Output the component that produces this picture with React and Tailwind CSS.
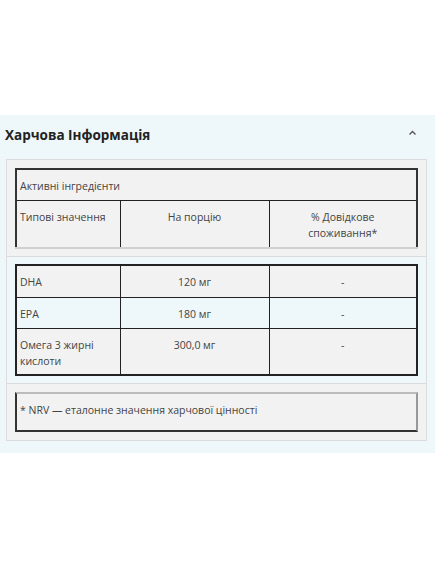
import React from 'react';

const cell = 'border border-[#222] align-top px-[3px] pt-[8px] leading-[16px]';

function HeaderTable() {
  return (
    <table className="w-full border-collapse border-2 border-[#333] border-b-[#d0d0d0] text-[10.5px] text-[#444]">
      <tbody>
        <tr className="h-[31px]">
          <td colSpan={3} className={cell}>Активні інгредієнти</td>
        </tr>
        <tr className="h-[48px]">
          <td className={`${cell} w-[104px]`}>Типові значення</td>
          <td className={`${cell} w-[149px] text-center`}>На порцію</td>
          <td className={`${cell} text-center`}>
            % Довідкове
            <br />
            споживання*
          </td>
        </tr>
      </tbody>
    </table>
  );
}

const rows = [
  { name: 'DHA', amount: '120 мг', h: 'h-[32px]', bg: 'bg-[#f2f2f2]' },
  { name: 'EPA', amount: '180 мг', h: 'h-[31px]', bg: 'bg-[#eef7f9]' },
  { name: 'Омега 3 жирні кислоти', amount: '300,0 мг', h: 'h-[47px]', bg: 'bg-[#f2f2f2]' },
];

function BodyTable() {
  return (
    <table className="w-full border-collapse border-2 border-[#222] text-[10.5px] text-[#444]">
      <tbody>
        {rows.map((r) => (
          <tr key={r.name} className={`${r.h} ${r.bg}`}>
            <td className={`${cell} w-[104px]`}>{r.name}</td>
            <td className={`${cell} w-[149px] text-center`}>{r.amount}</td>
            <td className={`${cell} text-center`}>-</td>
          </tr>
        ))}
      </tbody>
    </table>
  );
}

export default function App() {
  return (
    <div className="min-h-screen bg-white pt-[115px]" style={{ fontFamily: '"Open Sans", "Noto Sans", sans-serif' }}>
      <div className="bg-[#eef7f9] pb-[12px]">
        {/* Title row */}
        <div className="flex items-center justify-between pl-[5px] pr-[18px] pt-[10px] pb-[14px]">
          <h2 className="text-[13.5px] leading-[20px] font-bold text-[#222]">Харчова Інформація</h2>
          <svg width="9" height="6" viewBox="0 0 9 6" className="mt-[-4px]">
            <polyline points="1.5,4.5 4.5,1.5 7.5,4.5" fill="none" stroke="#555" strokeWidth="1.4" />
          </svg>
        </div>

        {/* Nutrition box */}
        <div className="mx-[6px] mr-[8px] border border-[#dcdcdc]">
          <div className="bg-[#f2f2f2] px-[8px] pt-[8px] pb-[7px] border-b border-[#dcdcdc]">
            <HeaderTable />
          </div>
          <div className="bg-[#eef7f9] px-[8px] pt-[7px] pb-[7px] border-b border-[#dcdcdc]">
            <BodyTable />
          </div>
          <div className="bg-[#f2f2f2] px-[8px] pt-[8px] pb-[8px]">
            <div className="h-[40px] border-2 border-[#333] border-t-[#bbb] border-r-[#999] px-[3px] pt-[8px] text-[10.5px] leading-[16px] text-[#444]">
              * NRV — еталонне значення харчової цінності
            </div>
          </div>
        </div>
      </div>
    </div>
  );
}
